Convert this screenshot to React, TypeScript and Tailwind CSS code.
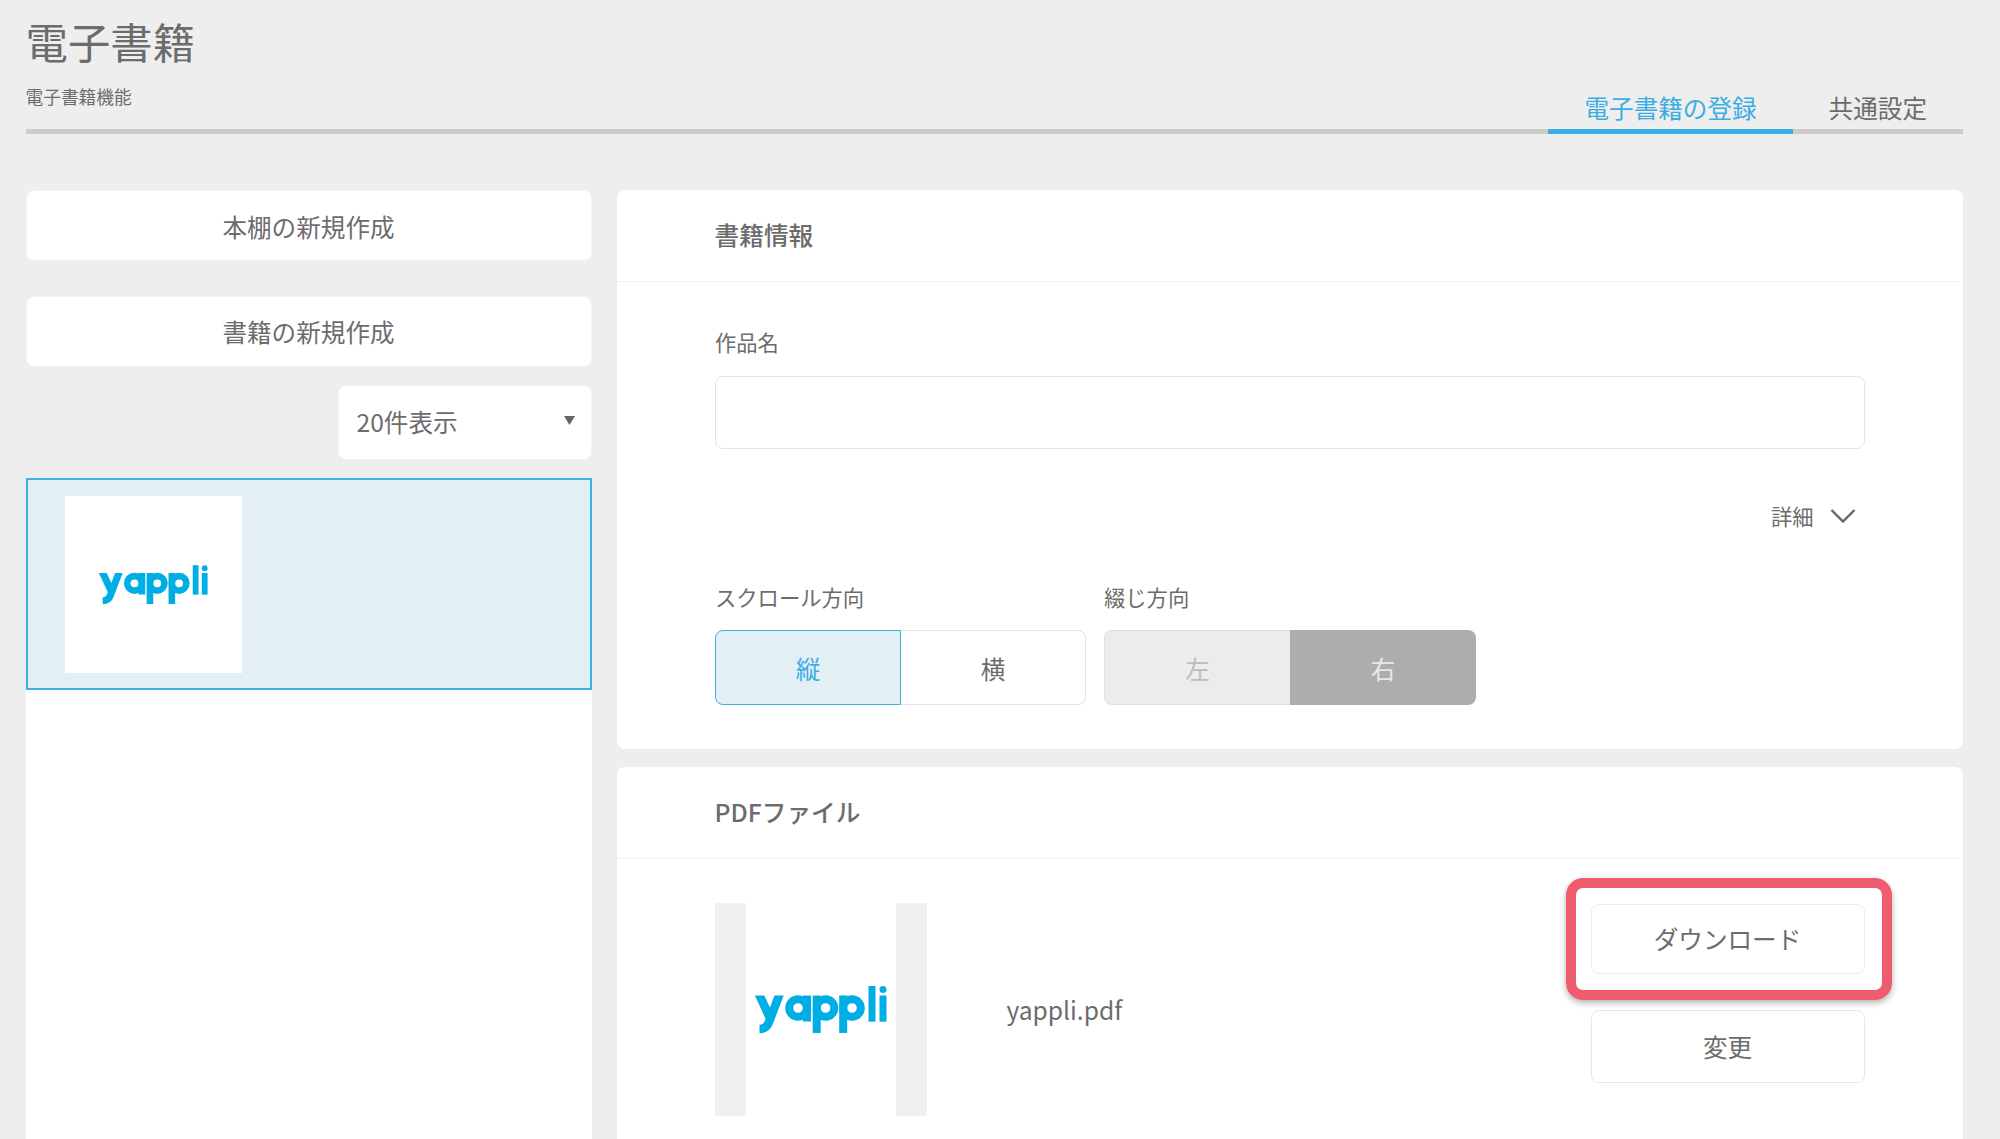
import type { ReactNode } from "react";

function YappliLogo({ className }: { className: string }): ReactNode {
  return (
    <svg viewBox="0 0 132 48" className={className} role="img" aria-label="yappli">
      <clipPath id="yappli-top">
        <rect x="0" y="9.5" width="132" height="39" />
      </clipPath>
      <g fill="none" stroke="#00aee6" strokeWidth="8">
        <g clipPath="url(#yappli-top)" strokeWidth="8.6">
          <path d="M3.5 7 L15 32" />
          <path d="M25 7 L14 36 Q11.5 43 4.5 43" />
        </g>
        <circle cx="43" cy="22" r="8.8" />
        <path d="M52 9.5 V35.5" />
        <circle cx="70.5" cy="22" r="8.8" />
        <path d="M61.7 9.5 V47" />
        <circle cx="97" cy="22" r="8.8" />
        <path d="M88.2 9.5 V47" />
        <path d="M117 0 V35.7" strokeWidth="7" />
        <path d="M128 9.5 V35.7" strokeWidth="7" />
      </g>
      <circle cx="128" cy="3.6" r="3.5" fill="#00aee6" />
    </svg>
  );
}

function SectionHeader({ title }: { title: string }): ReactNode {
  return (
    <div className="h-[92px] pb-[2px] flex items-center pl-[97.5px] border-b border-[#f2f2f4]">
      <h2 className="text-[24.7px] font-medium">{title}</h2>
    </div>
  );
}

function Label({ children }: { children: ReactNode }): ReactNode {
  return <div className="text-[21.3px] leading-[30px]">{children}</div>;
}

export default function App(): ReactNode {
  return (
    <div className="h-[1139px] overflow-hidden bg-[#eeeeee] pl-[25.5px] pr-[37px] text-[#6c6c6c] font-['Noto_Sans_CJK_JP',sans-serif]">
      <header className="flex justify-between items-end h-[134px] border-b-[5px] border-[#cccccc]">
        <div className="pb-[21px]">
          <h1 className="text-[42.4px] leading-[56px]">電子書籍</h1>
          <p className="mt-[15px] text-[17.7px] leading-[24px]">電子書籍機能</p>
        </div>
        <nav className="flex -mb-[5px] text-[24.6px] leading-[36px]">
          <div className="px-[36px] pb-[4px] border-b-[5px] border-[#3bade3] text-[#3bade3]">
            電子書籍の登録
          </div>
          <div className="px-[36px] pb-[4px] border-b-[5px] border-transparent">共通設定</div>
        </nav>
      </header>

      <div className="flex gap-[25.5px] pt-[56px] h-[1005px]">
        <aside className="w-[566px] shrink-0 flex flex-col text-[24.6px]">
          <button className="h-[71px] pt-px rounded-lg bg-white border border-[#f3f3f5]">
            本棚の新規作成
          </button>
          <button className="mt-[35px] h-[71px] pb-px rounded-lg bg-white border border-[#f3f3f5]">
            書籍の新規作成
          </button>
          <div className="mt-[18px] self-end w-[254px] h-[75px] pb-[3px] rounded-lg bg-white border border-[#f3f3f5] flex items-center justify-between pl-[18px] pr-[16px]">
            <span>20件表示</span>
            <svg viewBox="0 0 11 9" className="w-[11px] h-[9px] -mt-px">
              <path d="M0 0 H11 L5.5 9 Z" fill="#666666" />
            </svg>
          </div>
          <div className="mt-[18px] flex-1 bg-white">
            <div className="h-[212px] border-2 border-[#3fb0e6] bg-[#e2eff5] pl-[37px] pt-[16px]">
              <div className="w-[177px] h-[177px] bg-white flex items-center justify-center">
                <YappliLogo className="w-[109px] h-[40px]" />
              </div>
            </div>
          </div>
        </aside>

        <main className="flex-1 flex flex-col gap-[18px]">
          <section className="bg-white rounded-lg">
            <SectionHeader title="書籍情報" />
            <div className="pl-[98px] pr-[98.5px] pt-[45px] pb-[44px]">
              <Label>作品名</Label>
              <input className="mt-[19px] block w-full h-[73px] rounded-lg border border-[#e4e5ec]" />
              <div className="mt-[52px] pr-[9px] flex items-center justify-end gap-[16px] text-[21.3px] leading-[30px]">
                <span>詳細</span>
                <svg viewBox="0 0 25 14" className="w-[26px] h-[14px]" fill="none">
                  <path d="M1 1 L12.5 12.5 L24 1" stroke="#666666" strokeWidth="2.4" />
                </svg>
              </div>
              <div className="mt-[51px] flex gap-[18px]">
                <div>
                  <Label>スクロール方向</Label>
                  <div className="mt-[18px] flex w-[371px] h-[75px] text-[24.6px]">
                    <div className="flex-1 pt-[2px] flex items-center justify-center rounded-l-lg border border-[#3fb0e6] bg-[#e2eff5] text-[#3bade3]">
                      縦
                    </div>
                    <div className="flex-1 pt-[2px] flex items-center justify-center rounded-r-lg border border-l-0 border-[#e0e3ec]">
                      横
                    </div>
                  </div>
                </div>
                <div>
                  <Label>綴じ方向</Label>
                  <div className="mt-[18px] flex w-[372px] h-[75px] text-[24.6px]">
                    <div className="flex-1 pt-[2px] flex items-center justify-center rounded-l-lg border border-r-0 border-[#dfdfe3] bg-[#ececec] text-[#bbbbbb]">
                      左
                    </div>
                    <div className="w-[186px] pt-[2px] flex items-center justify-center rounded-r-lg bg-[#adadad] text-[#e8e8e8]">
                      右
                    </div>
                  </div>
                </div>
              </div>
            </div>
          </section>

          <section className="flex-1 bg-white rounded-t-lg">
            <SectionHeader title="PDFファイル" />
            <div className="pl-[97.5px] pr-[98.5px] pt-[44px] flex">
              <div className="w-[212px] h-[213px] px-[31px] bg-[#f0f0f0]">
                <div className="h-full bg-white flex items-center justify-center">
                  <YappliLogo className="w-[132px] h-[48px]" />
                </div>
              </div>
              <div className="ml-[80px] flex-1 h-[213px] flex items-center text-[24.6px]">
                yappli.pdf
              </div>
              <div className="w-[274px] flex flex-col gap-[36px] pt-px text-[24.6px]">
                <div className="relative">
                  <button className="w-full h-[70px] pb-px rounded-lg border border-[#ececf0]">
                    ダウンロード
                  </button>
                  <div className="absolute -left-[25px] -right-[27px] -top-[26px] -bottom-[26px] rounded-[17px] border-[10px] border-[#ee5c6e] shadow-[0_3px_6px_rgba(0,0,0,0.3)]" />
                </div>
                <button className="h-[73px] rounded-lg border border-[#e6e6ee]">変更</button>
              </div>
            </div>
          </section>
        </main>
      </div>
    </div>
  );
}
